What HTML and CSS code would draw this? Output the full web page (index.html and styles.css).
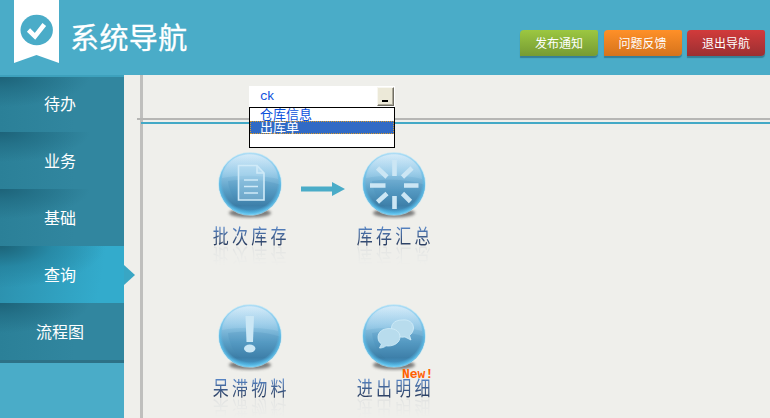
FILE: index.html
```html
<!DOCTYPE html>
<html lang="zh-CN">
<head>
<meta charset="utf-8">
<title>系统导航</title>
<link rel="stylesheet" href="styles.css">
</head>
<body>
<header class="header">
  <div class="ribbon">
    <svg width="45" height="63" viewBox="0 0 45 63">
      <path d="M0 0H45V63L22.5 55L0 63Z" fill="#fff"/>
      <ellipse cx="22.7" cy="30" rx="16.2" ry="15.3" fill="#4aacc8"/>
      <path d="M14.500 30L21 36.300L30.300 24.500" fill="none" stroke="#fff" stroke-width="4.6"/>
    </svg>
  </div>
  <h1 class="title">系统导航</h1>
  <div class="actions">
    <a class="btn green">发布通知</a>
    <a class="btn orange">问题反馈</a>
    <a class="btn red">退出导航</a>
  </div>
</header>
<div class="layout">
  <nav class="sidebar">
    <a class="tab first">待办</a>
    <a class="tab">业务</a>
    <a class="tab">基础</a>
    <a class="tab active">查询</a>
    <a class="tab last">流程图</a>
  </nav>
  <main class="main">
    <div class="rule-v"></div>
    <div class="rule-grey"></div>
    <div class="rule-blue"></div>
    <div class="combo">
      <div class="combo-field"><span>ck</span><b class="combo-button"></b></div>
      <div class="combo-list">
        <div class="option">仓库信息</div>
        <div class="option selected">出库单</div>
      </div>
    </div>
    <svg width="0" height="0" class="defs">
      <defs>
        <linearGradient id="ball" x1="0" y1="0" x2="0" y2="1">
          <stop offset="0" stop-color="#c4e4f7"/><stop offset=".3" stop-color="#94c8e6"/>
          <stop offset=".6" stop-color="#5a9fc6"/><stop offset=".85" stop-color="#3c7da6"/><stop offset="1" stop-color="#48a8d8"/>
        </linearGradient>
        <radialGradient id="rim" cx=".5" cy=".47" r=".53">
          <stop offset=".84" stop-color="#58bfee" stop-opacity="0"/><stop offset=".94" stop-color="#5dc4f0" stop-opacity=".7"/><stop offset="1" stop-color="#80d4f6"/>
        </radialGradient>
        <linearGradient id="gloss" x1="0" y1="0" x2="0" y2="1">
          <stop offset="0" stop-color="#fff" stop-opacity=".3"/><stop offset="1" stop-color="#b5e0f8" stop-opacity=".2"/>
        </linearGradient>
        <filter id="soft" x="-20%" y="-80%" width="140%" height="260%"><feGaussianBlur stdDeviation="1.6"/></filter>
        <g id="orb">
          <ellipse cx="36" cy="65" rx="21" ry="4.500" fill="#555" opacity=".75" filter="url(#soft)"/>
          <circle cx="36" cy="36" r="31.8" fill="#aee2f8" opacity=".7"/>
          <circle cx="36" cy="36" r="31" fill="url(#ball)"/>
          <path d="M14 33C16 50 27 62 41 66C55 64 66 54 67 37C50 31 30 31 14 33Z" fill="#4488b5" opacity=".22"/>
          <circle cx="36" cy="36" r="31" fill="url(#rim)"/>
          <path d="M8 30C9 15 21 6.500 36 6.500S64 17 64 31C50 27 24 27 8 30Z" fill="url(#gloss)"/>
        </g>
      </defs>
    </svg>
    <div class="flow">
      <div class="node">
        <svg class="ball" width="72" height="72" viewBox="0 0 72 72"><use href="#orb"/>
          <g fill="#b9dff3" fill-opacity=".35" stroke="#d0eaf8" stroke-width="1.6"><path d="M24.500 17.500H43L50 25V52H24.500Z"/><path d="M43 17.500V25H50" fill="#c9e9f8"/><path d="M30 32H44M30 38.500H44M30 45H44"/></g>
        </svg>
        <div class="label">批次库存</div>
      </div>
      <svg class="arrow" width="44" height="14" viewBox="0 0 44 14"><path d="M0 4.500H31V0L44 7L31 14V9.500H0Z" fill="#4aacc8"/></svg>
      <div class="node">
        <svg class="ball" width="72" height="72" viewBox="0 0 72 72"><use href="#orb"/>
          <g stroke="#cce6f4" stroke-width="4.6"><path d="M36.500 12V28M36.500 48V61M12 37.500H27.500M46 37.500H60.500M19.500 20L29 29M54 20L44.500 29M19.500 54L29 45.500M52.500 53.500L44.500 45.500"/></g>
        </svg>
        <div class="label">库存汇总</div>
      </div>
      <div class="node">
        <svg class="ball" width="72" height="72" viewBox="0 0 72 72"><use href="#orb"/>
          <g fill="#cbe7f5"><path d="M31.500 16H40L39 42H32.500Z"/><ellipse cx="35.700" cy="48.500" rx="5.700" ry="4"/></g>
        </svg>
        <div class="label">呆滞物料</div>
      </div>
      <span></span>
      <div class="node">
        <svg class="ball" width="72" height="72" viewBox="0 0 72 72"><use href="#orb"/>
          <g fill="#b8dced" stroke="#d3edf9" stroke-width=".8"><path d="M44 20C51 19 55.500 23 55.500 28C55.500 31 53.500 34 51.500 35.500L53 40L47 37C38 38 33.500 34 33.500 28C33.500 23 38 20 44 20Z"/><path d="M31 28.500C38 28.500 42 32 42 37C42 42 37 46 30 46L28 45.800C26 47.500 23.500 48 21.500 48L23.500 44C21 42.500 20 40 20 37C20 32 25 28.500 31 28.500Z"/></g>
        </svg>
        <div class="label">进出明细</div>
        <span class="new">New!</span>
      </div>
    </div>
  </main>
</div>
</body>
</html>
```

FILE: styles.css
```css
* { box-sizing: border-box; }
body {
  margin: 0;
  width: 770px;
  height: 418px;
  overflow: hidden;
  background: #efefeb;
  color: #fff;
  font-family: "Liberation Sans", "Noto Sans CJK SC", sans-serif;
}
.header {
  display: flex;
  height: 75px;
  padding: 0 5px 0 14px;
  background: #4aacc8;
}
.ribbon { width: 45px; height: 63px; }
.title {
  margin: 13px 0 0 11px;
  font: 400 29px/46px "Noto Sans CJK SC", sans-serif;
  letter-spacing: .4px;
  -webkit-text-stroke: .3px #fff;
}
.actions { display: flex; gap: 5.5px; margin: 30px 0 0 auto; }
.btn {
  width: 78px;
  height: 26px;
  border-radius: 4px 2px 4px 0;
  font: 12px/25px "Noto Sans CJK SC", sans-serif;
  text-align: center;
  box-shadow: 0 2px 1px #357f97;
}
.green { background: linear-gradient(#9cc741, #769b33); }
.orange { background: linear-gradient(#ff9028, #d5731c); }
.red { background: linear-gradient(#d23b3b, #9b2f32); }
.layout { display: flex; height: 343px; }
.sidebar { width: 124px; flex: none; background: #4aacc8; }
.tab {
  display: block;
  position: relative;
  height: 57px;
  background: radial-gradient(ellipse 90px 30px at 0 0, #1d6379, rgba(33, 108, 131, .75) 40%, transparent), linear-gradient(90deg, #2b8098, #31869f 60%);
  font: 16px/56px "Noto Sans CJK SC", sans-serif;
  text-align: center;
  padding-right: 4px;
}
.first { border-top: 2px solid #3da1bd; line-height: 53px; }
.active {
  background: radial-gradient(ellipse 105px 42px at 0 0, #1c6479, rgba(34, 126, 153, .6) 50%, transparent), linear-gradient(100deg, #2c90ad, #33abcc 80%);
}
.active::after {
  content: "";
  position: absolute;
  left: 124px;
  top: 19px;
  border: solid transparent;
  border-width: 10px 0 10px 11px;
  border-left-color: #39a6c4;
}
.last { height: 60px; border-bottom: 3px solid #2d7187; }
.main { position: relative; flex: 1; height: 343px; overflow: hidden; }
.rule-v { position: absolute; left: 16px; top: 0; width: 3px; height: 343px; background: #bfbfbd; }
.rule-grey { position: absolute; left: 13px; top: 43px; right: 0; height: 2px; background: #b6b6b4; }
.rule-blue { position: absolute; left: 17px; top: 47px; right: 0; height: 2px; background: #43a9c6; }
.combo {
  position: absolute;
  z-index: 2;
  left: 125px;
  top: 11px;
  width: 146px;
  color: #0a50dc;
}
.combo-field {
  display: flex;
  justify-content: space-between;
  height: 21px;
  padding: 1px 1px 1px 11px;
  background: #fff;
  font: 13px/19px "Liberation Mono", monospace;
  letter-spacing: -1px;
}
.combo-button {
  width: 17px;
  height: 19px;
  padding: 12px 4px 0;
  background: #ece9d8;
  border: 1px solid;
  border-color: #f8f7f1 #716f64 #716f64 #f8f7f1;
  box-shadow: inset -1px -1px #aca899;
}
.combo-button::before { content: ""; display: block; width: 6px; height: 2px; background: #000; }
.combo-list { height: 41px; border: 1px solid #000; background: #fff; }
.option { height: 13px; padding-left: 10px; font: 13px/11px "Noto Sans CJK SC", sans-serif; }
.selected { color: #fff; background: #316ac5; outline: 1px dotted #d89a2b; outline-offset: -1px; }
.flow {
  display: grid;
  grid-template-columns: 76px 68px 76px;
  grid-template-rows: 152px 118px;
  padding: 73px 0 0 88px;
}
.node { position: relative; text-align: center; }
.ball { display: block; margin: 0 auto; }
.arrow { margin: 34px 0 0 13px; }
.label {
  width: 96px;
  height: 24px;
  margin: 4px 0 0 -12px;
  padding-left: 4px;
  font: 20px/24px "Noto Sans CJK SC", sans-serif;
  letter-spacing: 4px;
  white-space: nowrap;
  color: transparent;
  background: linear-gradient(#5683c2 15%, #2c3f62 85%);
  -webkit-background-clip: text;
  background-clip: text;
  transform: scaleX(.8);
  -webkit-box-reflect: below -4px linear-gradient(transparent 10%, rgba(0, 0, 0, .08));
}
.new {
  position: absolute;
  left: 46px;
  top: 68px;
  color: #ff6000;
  font: bold 13px/14px "Liberation Mono", monospace;
}
.defs { position: absolute; }
```
